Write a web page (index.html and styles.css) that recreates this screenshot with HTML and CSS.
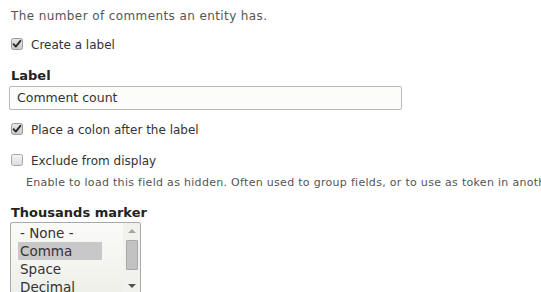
FILE: index.html
```html
<!DOCTYPE html>
<html lang="en">
<head>
<meta charset="utf-8">
<title>Field settings</title>
<link rel="stylesheet" href="styles.css">
</head>
<body>
<div class="form">
  <div class="desc top-desc">The number of comments an entity has.</div>

  <div class="check-row row-create">
    <span class="cb"><svg width="12" height="12" viewBox="0 0 12 12"><defs><linearGradient id="g1" x1="0" y1="0" x2="0" y2="1"><stop offset="0" stop-color="#e6e6e6"/><stop offset="1" stop-color="#c9c9c9"/></linearGradient></defs><rect x="0.5" y="0.5" width="11" height="11" rx="2" fill="url(#g1)" stroke="#9a9a9a"/><path d="M2.6 6.2 L4.8 8.6 L9.4 2.8" fill="none" stroke="#2a2a2a" stroke-width="1.9" stroke-linecap="round" stroke-linejoin="round"/></svg></span>
    <span class="cb-label">Create a label</span>
  </div>

  <div class="field-label label-label">Label</div>
  <div class="text-input">Comment count</div>

  <div class="check-row row-colon">
    <span class="cb"><svg width="12" height="12" viewBox="0 0 12 12"><defs><linearGradient id="g2" x1="0" y1="0" x2="0" y2="1"><stop offset="0" stop-color="#e6e6e6"/><stop offset="1" stop-color="#c9c9c9"/></linearGradient></defs><rect x="0.5" y="0.5" width="11" height="11" rx="2" fill="url(#g2)" stroke="#9a9a9a"/><path d="M2.6 6.2 L4.8 8.6 L9.4 2.8" fill="none" stroke="#2a2a2a" stroke-width="1.9" stroke-linecap="round" stroke-linejoin="round"/></svg></span>
    <span class="cb-label">Place a colon after the label</span>
  </div>

  <div class="check-row row-exclude">
    <span class="cb"><svg width="12" height="12" viewBox="0 0 12 12"><defs><linearGradient id="g3" x1="0" y1="0" x2="0" y2="1"><stop offset="0" stop-color="#f4f4f4"/><stop offset="1" stop-color="#dcdcdc"/></linearGradient></defs><rect x="0.5" y="0.5" width="11" height="11" rx="2" fill="url(#g3)" stroke="#a6a6a6"/></svg></span>
    <span class="cb-label">Exclude from display</span>
  </div>
  <div class="desc sub-desc">Enable to load this field as hidden. Often used to group fields, or to use as token in another field.</div>

  <div class="field-label label-thousands">Thousands marker</div>
  <div class="listbox">
    <div class="options">
      <div class="opt">- None -</div>
      <div class="opt selected">Comma</div>
      <div class="opt">Space</div>
      <div class="opt">Decimal</div>
    </div>
    <div class="scrollbar">
      <div class="arrow up"></div>
      <div class="thumb"></div>
      <div class="arrow down"></div>
    </div>
  </div>
</div>
</body>
</html>
```

FILE: styles.css
```css
html, body {
  margin: 0;
  padding: 0;
  background: #ffffff;
  overflow: hidden;
}
body {
  font-family: "DejaVu Sans", Verdana, sans-serif;
  color: #333333;
  width: 541px;
  height: 292px;
}
.form {
  padding-left: 10px;
  display: flex;
  flex-direction: column;
  align-items: flex-start;
  height: 292px;
  overflow: hidden;
}
.desc {
  font-size: 11px;
  line-height: 16px;
  height: 16px;
  flex: none;
  color: #555555;
  white-space: nowrap;
}
.top-desc {
  font-size: 12px;
  letter-spacing: 0.4px;
  margin-top: 8px;
  padding-left: 1px;
}
.check-row {
  display: flex;
  align-items: flex-start;
  height: 18px;
  flex: none;
  padding-left: 1px;
}
.row-create { margin-top: 12px; }
.row-colon { margin-top: 11px; }
.row-exclude { margin-top: 13px; }
.cb {
  display: block;
  width: 12px;
  height: 12px;
  margin-top: 2px;
}
.cb svg { display: block; }
.cb-label {
  font-size: 12px;
  line-height: 18px;
  margin-left: 8px;
  color: #333333;
}
.field-label {
  font-size: 13px;
  font-weight: bold;
  line-height: 16px;
  height: 16px;
  flex: none;
  color: #222222;
  padding-left: 1px;
}
.label-label { margin-top: 14px; }
.text-input {
  box-sizing: border-box;
  flex: none;
  width: 393px;
  height: 24px;
  margin-top: 2px;
  margin-left: -1px;
  border: 1px solid #b8b8b8;
  border-radius: 2px;
  background: #fcfcfa;
  font-size: 12.5px;
  line-height: 22px;
  padding-left: 7px;
  color: #333333;
}
.sub-desc {
  margin-top: 5px;
  padding-left: 16px;
  letter-spacing: 0.3px;
}
.label-thousands { margin-top: 14px; }
.listbox {
  box-sizing: border-box;
  flex: none;
  width: 131px;
  height: 74px;
  margin-top: 1px;
  border: 1px solid #a9a9a9;
  border-bottom: none;
  border-radius: 3px 3px 0 0;
  background: linear-gradient(to bottom, #fafaf8, #efefe9);
  display: flex;
  justify-content: space-between;
  padding: 1px 0 0 7px;
  overflow: hidden;
}
.options {
  display: flex;
  flex-direction: column;
}
.opt {
  font-size: 13.5px;
  line-height: 18px;
  height: 18px;
  flex: none;
  width: 84px;
  padding-left: 2px;
  box-sizing: border-box;
  color: #333333;
  white-space: nowrap;
}
.opt.selected {
  background: #c8c8c8;
}
.scrollbar {
  width: 17px;
  display: flex;
  flex-direction: column;
  align-items: center;
  background: #f1f1ee;
  margin-top: -1px;
}
.arrow {
  width: 0;
  height: 0;
  flex: none;
  border-left: 4px solid transparent;
  border-right: 4px solid transparent;
}
.arrow.up {
  margin-top: 6px;
  border-bottom: 4px solid #a3a3a3;
}
.arrow.down {
  margin-top: 14px;
  border-top: 4px solid #505050;
}
.thumb {
  flex: none;
  margin-top: 7px;
  width: 12px;
  height: 30px;
  box-sizing: border-box;
  background: #c2c2c2;
  border: 1px solid #a8a8a8;
  border-radius: 1px;
}
```
